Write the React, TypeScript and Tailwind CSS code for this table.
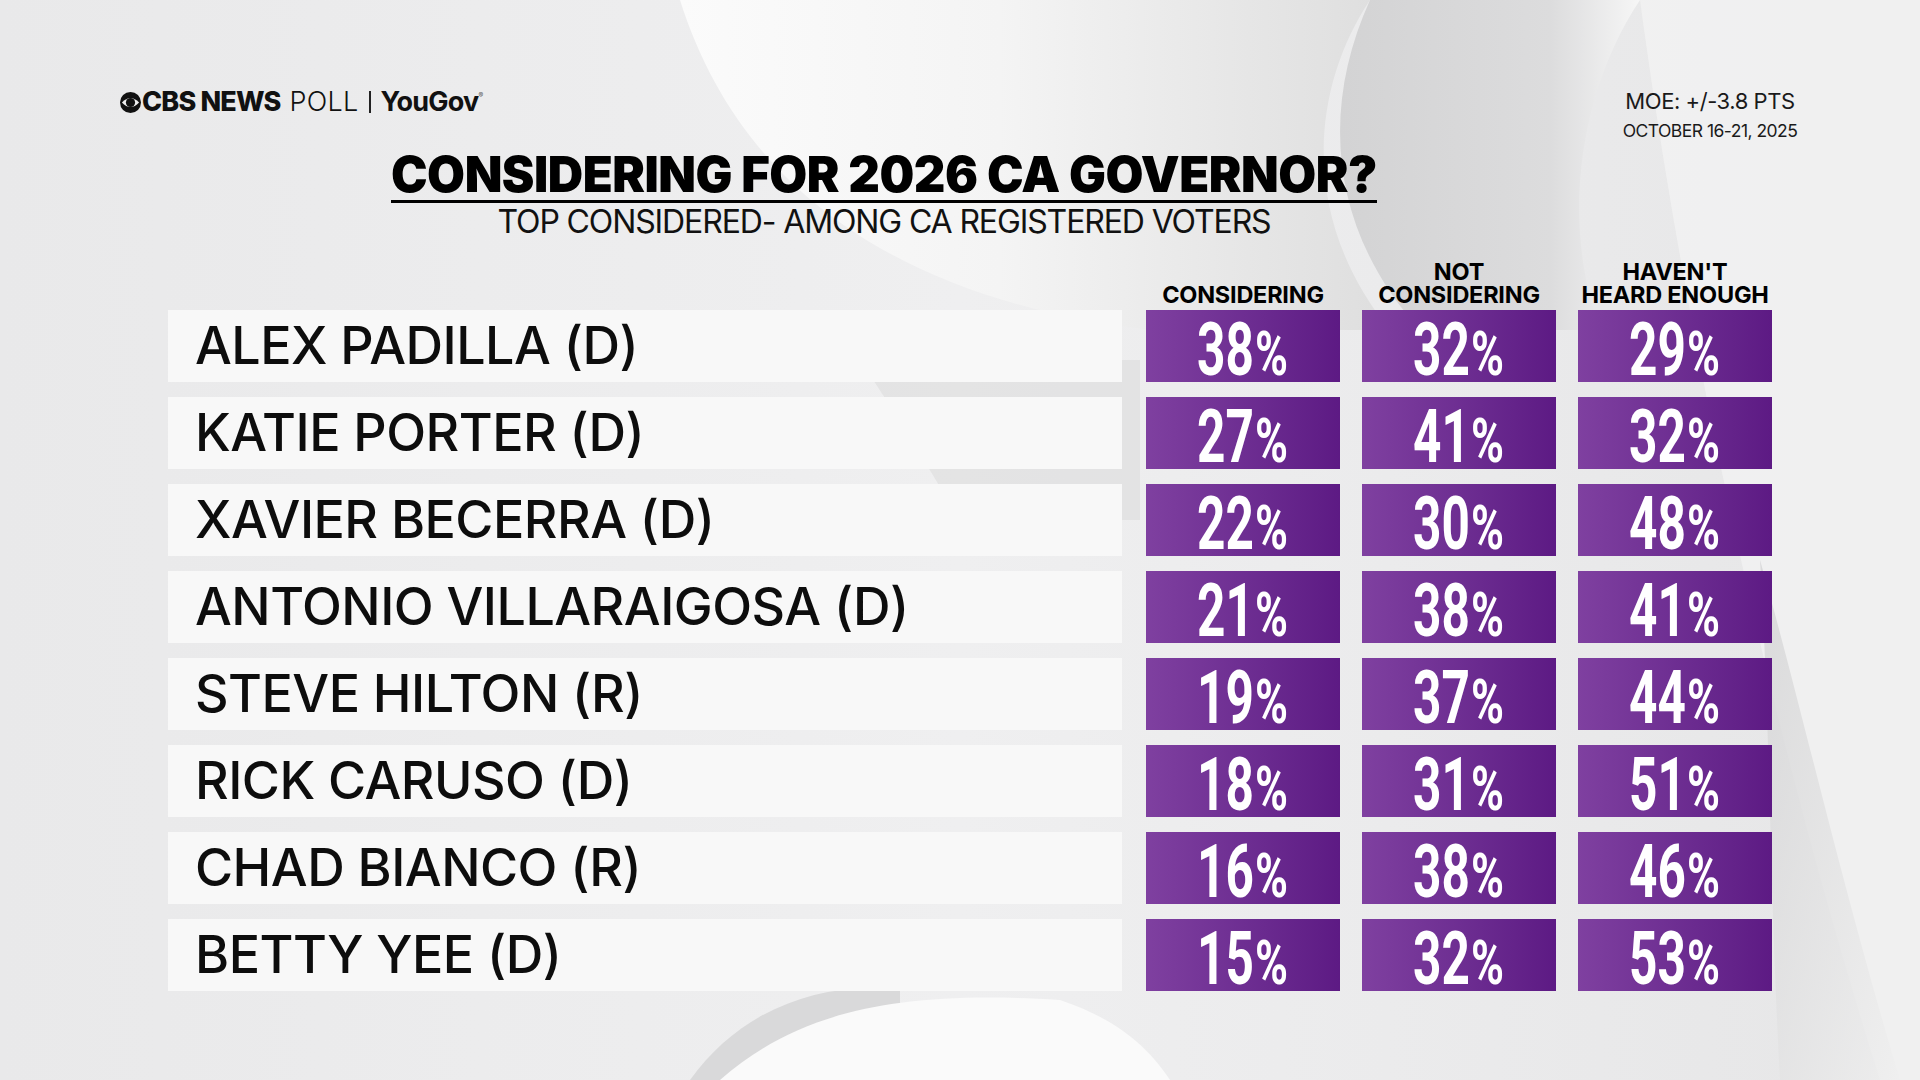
import * as React from "react";

type Row = {
    name: string;
    considering: number;
    notConsidering: number;
    notHeard: number;
};

const rows: Row[] = [
    {name: "ALEX PADILLA (D)", considering: 38, notConsidering: 32, notHeard: 29},
    {name: "KATIE PORTER (D)", considering: 27, notConsidering: 41, notHeard: 32},
    {name: "XAVIER BECERRA (D)", considering: 22, notConsidering: 30, notHeard: 48},
    {name: "ANTONIO VILLARAIGOSA (D)", considering: 21, notConsidering: 38, notHeard: 41},
    {name: "STEVE HILTON (R)", considering: 19, notConsidering: 37, notHeard: 44},
    {name: "RICK CARUSO (D)", considering: 18, notConsidering: 31, notHeard: 51},
    {name: "CHAD BIANCO (R)", considering: 16, notConsidering: 38, notHeard: 46},
    {name: "BETTY YEE (D)", considering: 15, notConsidering: 32, notHeard: 53},
];

const heads = ["CONSIDERING", "NOT\nCONSIDERING", "HAVEN'T\nHEARD ENOUGH"];

const CbsEye = () => (
    <svg width="21" height="21" viewBox="0 0 20 20" className="mr-[1px]">
        <circle cx="10" cy="10" r="10" fill="#111"/>
        <path d="M1.8 10 Q10 1.4 18.2 10 Q10 18.6 1.8 10 Z" fill="#f0f0f0"/>
        <circle cx="10" cy="10" r="4.4" fill="#111"/>
    </svg>
);

// swooshes in the backdrop
const Backdrop = () => (
    <svg className="absolute inset-0" width="1920" height="1080" viewBox="0 0 1920 1080">
        <defs>
            <linearGradient id="base" x1="0" y1="0" x2="1" y2="0">
                <stop offset="0" stopColor="#e9e9ea"/>
                <stop offset="0.5" stopColor="#efeff0"/>
                <stop offset="1" stopColor="#e6e6e7"/>
            </linearGradient>
            <linearGradient id="white" x1="0" y1="0" x2="1" y2="0">
                <stop offset="0" stopColor="#fbfbfb"/>
                <stop offset="0.45" stopColor="#f4f4f4"/>
                <stop offset="1" stopColor="#dedede"/>
            </linearGradient>
            <linearGradient id="shade" x1="0" y1="0" x2="1" y2="0">
                <stop offset="0" stopColor="#d3d3d4"/>
                <stop offset="0.7" stopColor="#dcdcdd"/>
                <stop offset="1" stopColor="#f6f6f6"/>
            </linearGradient>
            <linearGradient id="shade2" x1="0" y1="0" x2="1" y2="1">
                <stop offset="0" stopColor="#d4d4d5"/>
                <stop offset="1" stopColor="#efefef"/>
            </linearGradient>
        </defs>
        <rect width="1920" height="1080" fill="url(#base)"/>
        <path d="M680 0 C740 190 900 300 1150 330 L1390 330 C1300 220 1310 90 1370 0 Z" fill="url(#white)"/>
        <path d="M1370 0 C1320 110 1330 230 1420 330 L1600 330 C1560 220 1580 90 1640 0 Z" fill="url(#shade)"/>
        <path d="M1640 0 C1680 300 1760 700 1880 1080 L1920 1080 L1920 0 Z" fill="#f4f4f4" opacity="0.7"/>
        <path d="M1760 560 C1800 700 1840 880 1900 1080 L1780 1080 C1770 900 1770 720 1760 560 Z" fill="url(#shade2)" opacity="0.8"/>
        <path d="M690 1080 C740 1010 820 980 900 990 L900 1080 Z" fill="#d9d9da"/>
        <path d="M720 1080 C800 1010 900 990 1060 1000 C1120 1020 1150 1050 1170 1080 Z" fill="#fafafa"/>
        <path d="M860 360 C900 420 930 470 960 520 L1140 520 L1140 360 Z" fill="#dcdcdc" opacity="0.6"/>
    </svg>
);

const Pct = ({value}: { value: number }) => (
    <div
        className="flex h-[72px] w-[194px] items-baseline justify-center bg-gradient-to-r from-[#7f40a0] to-[#5d1a84] pt-[3px] font-['Roboto',sans-serif] font-bold text-white">
        <span className="inline-block w-[56px] whitespace-nowrap text-[75px] leading-[72px]">
            <span className="inline-block origin-left scale-x-[0.66]">{value}</span>
        </span>
        <span className="ml-[2px] inline-block w-[35px] whitespace-nowrap text-[62px] leading-[72px]">
            <span className="inline-block origin-left scale-x-[0.72]">%</span>
        </span>
    </div>
);

export default function App() {
    return (
        <div className="relative h-[1080px] w-[1920px] overflow-hidden font-['Inter',sans-serif] text-black">
            <Backdrop/>
            <div className="relative flex flex-col">
                {/* top bar */}
                <div className="flex items-start justify-between pl-[120px] pr-[110px] pt-[88px]">
                    <div className="flex h-[28px] items-center text-[27px] leading-[28px] text-[#111]">
                        <CbsEye/>
                        <span className="font-extrabold tracking-[-0.03em]">CBS NEWS</span>
                        <span className="ml-[9px] font-light tracking-[0.01em]">POLL</span>
                        <span className="mx-[10px] h-[22px] w-[2px] bg-[#222]"/>
                        <span className="font-bold tracking-[-0.03em]">YouGov</span>
                        <span className="mb-[12px] text-[7px] text-[#555]">®</span>
                    </div>
                    <div className="flex w-[200px] flex-col items-center text-[#1a1a1a]">
                        <span className="text-[22px] leading-[26px] tracking-[-0.02em]">MOE: +/-3.8 PTS</span>
                        <span className="mt-[7px] text-[17.5px] leading-[20px] tracking-[-0.03em]">OCTOBER 16-21, 2025</span>
                    </div>
                </div>

                {/* title */}
                <div className="mt-[11px] flex w-[1768px] flex-col items-center">
                    <span className="border-b-[3px] border-black pb-[2px] text-[49px] font-black leading-[46px] tracking-[-0.01em]">
                        CONSIDERING FOR 2026 CA GOVERNOR?
                    </span>
                    <span className="mt-[3px] text-[32px] leading-[32px] tracking-[-0.035em] text-[#111]">
                        TOP CONSIDERED- AMONG CA REGISTERED VOTERS
                    </span>
                </div>

                {/* column heads */}
                <div className="flex h-[68px] items-end pl-[168px]">
                    <div className="w-[978px]"/>
                    {heads.map((h, i) => (
                        <div key={h}
                             className={`w-[194px] whitespace-pre-line text-center text-[23.5px] font-bold leading-[23px] tracking-[-0.01em] ${i > 0 ? "ml-[22px]" : ""}`}>
                            {h}
                        </div>
                    ))}
                </div>

                {/* rows */}
                <div className="mt-[4px] flex flex-col gap-[15px] pl-[168px]">
                    {rows.map((r) => (
                        <div key={r.name} className="flex h-[72px] items-stretch">
                            <div className="flex w-[954px] items-center bg-[#f8f8f8] pl-[27px] text-[52px] font-medium leading-[72px] tracking-[-0.01em] text-[#0d0d0d]">
                                {r.name}
                            </div>
                            <div className="ml-[24px] flex gap-[22px]">
                                <Pct value={r.considering}/>
                                <Pct value={r.notConsidering}/>
                                <Pct value={r.notHeard}/>
                            </div>
                        </div>
                    ))}
                </div>
            </div>
        </div>
    );
}
